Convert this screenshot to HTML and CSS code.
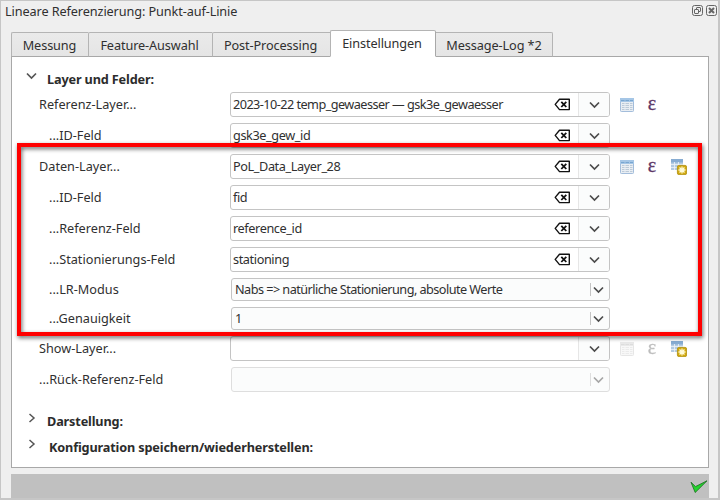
FILE: index.html
```html
<!DOCTYPE html>
<html lang="de">
<head>
<meta charset="utf-8">
<title>Lineare Referenzierung: Punkt-auf-Linie</title>
<link rel="stylesheet" href="styles.css">
</head>
<body>
<svg class="defs" width="0" height="0">
  <symbol id="down" viewBox="0 0 11 8"><path d="M1 1.5 5.5 6 10 1.5" fill="none" stroke="currentColor" stroke-width="1.7"/></symbol>
  <symbol id="right" viewBox="0 0 8 10"><path d="M1.5 1 6 5 1.5 9" fill="none" stroke="currentColor" stroke-width="1.5"/></symbol>
  <symbol id="clear" viewBox="0 0 17 13"><path d="M5.5 1.2H15.3V11.6H5.5L1.2 6.4Z" fill="#fff" stroke="#111" stroke-width="1.4" stroke-linejoin="round"/><path d="M7.3 3.8 12.3 9M12.3 3.8 7.3 9" stroke="#111" stroke-width="1.8"/></symbol>
  <symbol id="table" viewBox="0 0 14 14"><rect x=".5" y=".5" width="13" height="13" rx=".8" fill="#e9eef3" stroke="#a3bddb"/><path d="M0 0H14V4H0Z" fill="#a5c6e6"/><path d="M1 2.500H4.500M5.500 2.500H9M10 2.500H13" stroke="#79a6d0"/><path d="M2 5.500H4.500M5.500 5.500H9M10 5.500H12.500M2 7.500H4.500M5.500 7.500H9M10 7.500H12.500M2 9.500H4.500M5.500 9.500H9M10 9.500H12.500M2 11.500H4.500M5.500 11.500H9M10 11.500H12.500" stroke="#bccad8"/></symbol>
  <symbol id="newtable" viewBox="0 0 16 16"><path d="M0 0H12V11H0Z" fill="#b4cbe2"/><path d="M0 0H12V3.500H0Z" fill="#87acd2"/><path d="M0 5.500H12M0 8.500H12M3.500 3V11M7.500 3V11" stroke="#eef3f8" stroke-width=".8"/><rect x="6.400" y="6.400" width="9.200" height="9.200" rx="1.500" fill="#d0a80e" stroke="#b08d08" stroke-width=".8"/><path d="M11 7.500V14.500M7.500 11H14.500M8.500 8.500 13.500 13.500M13.500 8.500 8.500 13.500" fill="none" stroke="#fffbd8" stroke-width="1.300"/></symbol>
</svg>
<div class="dock">
  <header class="titlebar">
    <span class="title">Lineare Referenzierung: Punkt-auf-Linie</span>
    <svg class="winbtns" width="26" height="12" viewBox="0 0 26 12" fill="none" stroke="#666">
      <rect x=".5" y=".5" width="10" height="10" rx="2"/><rect x="4.500" y="2.500" width="4" height="4" rx=".5"/><rect x="2.500" y="4.500" width="4" height="4" rx=".5" fill="#efefef"/>
      <rect x="14.500" y=".5" width="10" height="10" rx="2"/><path d="M17 3 22 8M22 3 17 8" stroke-width="2"/>
    </svg>
  </header>
  <nav class="tabs">
    <div class="tab t1"><span>Messung</span></div>
    <div class="tab t2"><span>Feature-Auswahl</span></div>
    <div class="tab t3"><span>Post-Processing</span></div>
    <div class="tab t4 active"><span>Einstellungen</span></div>
    <div class="tab t5"><span>Message-Log *2</span></div>
  </nav>
  <main class="panel">
    <div class="section first"><svg class="arrow" width="11" height="8"><use href="#down"/></svg><b>Layer und Felder:</b></div>
    <div class="form">
      <div class="row"><label>Referenz-Layer...</label><div class="combo"><span class="value long">2023-10-22 temp_gewaesser — gsk3e_gewaesser</span><svg class="clear"><use href="#clear"/></svg><i class="drop"><svg><use href="#down"/></svg></i></div><svg class="table"><use href="#table"/></svg><span class="eps">ε</span></div>
      <div class="row"><label class="sub">...ID-Feld</label><div class="combo"><span class="value">gsk3e_gew_id</span><svg class="clear"><use href="#clear"/></svg><i class="drop"><svg><use href="#down"/></svg></i></div></div>
      <div class="row"><label>Daten-Layer...</label><div class="combo"><span class="value">PoL_Data_Layer_28</span><svg class="clear"><use href="#clear"/></svg><i class="drop"><svg><use href="#down"/></svg></i></div><svg class="table"><use href="#table"/></svg><span class="eps">ε</span><svg class="newtable"><use href="#newtable"/></svg></div>
      <div class="row"><label class="sub">...ID-Feld</label><div class="combo"><span class="value">fid</span><svg class="clear"><use href="#clear"/></svg><i class="drop"><svg><use href="#down"/></svg></i></div></div>
      <div class="row"><label class="sub">...Referenz-Feld</label><div class="combo"><span class="value">reference_id</span><svg class="clear"><use href="#clear"/></svg><i class="drop"><svg><use href="#down"/></svg></i></div></div>
      <div class="row"><label class="sub">...Stationierungs-Feld</label><div class="combo"><span class="value">stationing</span><svg class="clear"><use href="#clear"/></svg><i class="drop"><svg><use href="#down"/></svg></i></div></div>
      <div class="row low"><label class="sub">...LR-Modus</label><div class="combo plain"><span class="value long">Nabs =&gt; natürliche Stationierung, absolute Werte</span><i class="drop"><svg><use href="#down"/></svg></i></div></div>
      <div class="row low"><label class="sub">...Genauigkeit</label><div class="combo plain"><span class="value">1</span><i class="drop"><svg><use href="#down"/></svg></i></div></div>
      <div class="row"><label>Show-Layer...</label><div class="combo"><span class="value"></span><i class="drop"><svg><use href="#down"/></svg></i></div><svg class="table off"><use href="#table"/></svg><span class="eps off">ε</span><svg class="newtable"><use href="#newtable"/></svg></div>
      <div class="row"><label>...Rück-Referenz-Feld</label><div class="combo plain disabled"><span class="value"></span><i class="drop"><svg><use href="#down"/></svg></i></div></div>
    </div>
    <div class="section second"><svg class="arrow" width="8" height="10"><use href="#right"/></svg><b>Darstellung:</b></div>
    <div class="section third"><svg class="arrow" width="8" height="10"><use href="#right"/></svg><b>Konfiguration speichern/wiederherstellen:</b></div>
  </main>
  <footer class="status"><svg width="18" height="14" viewBox="0 0 18 14"><path d="M1 2.200 5.500 6.600 17 .8 5.200 12.500Z" fill="#22d52c" stroke="#26742a" stroke-width=".9" stroke-linejoin="round"/></svg></footer>
  <div class="highlight"></div>
</div>
</body>
</html>
```
FILE: styles.css
```css
* { box-sizing: border-box; }
body { margin: 0; background: #efefef; color: #303030; font: 12.7px/18px "Noto Sans", sans-serif; letter-spacing: -0.1px; }
svg { display: block; flex: none; }
.defs { position: absolute; }
.dock { position: relative; width: 720px; height: 500px; overflow: hidden; border: 1px solid #c6c6c6; border-right-width: 2px; border-bottom-width: 2px; display: flex; flex-direction: column; padding: 0 9px 0 10px; }
.titlebar { height: 29px; flex: none; display: flex; justify-content: space-between; align-items: flex-start; margin: 0 -8px 0 -6px; padding-top: 1px; }
.winbtns { margin: 3px -1px 0 0; }
.tabs { height: 27px; flex: none; display: flex; align-items: flex-end; margin-bottom: -1px; z-index: 1; letter-spacing: -0.1px; }
.tab { height: 25px; border: 1px solid #b4b4b4; border-right: 0; border-bottom-color: #a8a8a8; background: linear-gradient(#eaeaea, #e5e5e5); text-align: center; line-height: 24px; white-space: nowrap; border-top-left-radius: 2px; }
.t1 { width: 77px; padding-right: 1px; } .t2 { width: 124px; padding-right: 2px; } .t3 { width: 118px; padding-right: 2px; } .t4 { width: 106px; padding-right: 2px; } .t5 { width: 117px; border-right: 1px solid #b4b4b4; border-left: 0; border-radius: 0 2px 0 0; }
.active { height: 27px; background: #fff; border-right: 1px solid #a8a8a8; border-bottom-color: #fff; border-radius: 2px 2px 0 0; line-height: 25px; }
.panel { height: 412px; flex: none; border: 1px solid #a8a8a8; background: #fff; }
.section { display: flex; height: 18px; padding-left: 15px; color: #2c2c2c; }
.section b { font-size: 12.7px; letter-spacing: -0.15px; }
.arrow { color: #555; }
.first { margin-top: 13px; margin-bottom: 4px; padding-left: 14px; }
.first .arrow { margin: 2px 10px 0 0; }
.form { display: flex; flex-direction: column; gap: 6px; padding-left: 27px; }
.row { height: 25px; display: flex; align-items: center; }
.row.low { height: 23px; }
label { width: 191px; flex: none; white-space: nowrap; padding-bottom: 1px; letter-spacing: 0; }
label.sub { padding-left: 10px; }
.combo { width: 380px; height: 100%; flex: none; display: flex; align-items: center; border: 1px solid #c4c4c4; border-radius: 3px; background: #fff; padding-left: 2px; }
.value { flex: 1; white-space: nowrap; letter-spacing: -0.4px; padding-bottom: 1px; }
.value.long { letter-spacing: -0.55px; }
.clear { width: 17px; height: 13px; margin-right: 7px; }
.drop { width: 31px; height: 100%; display: flex; align-items: center; justify-content: center; border-left: 1px solid #e6e6e6; background: #fbfcfc; color: #4c4c4c; border-radius: 0 2px 2px 0; }
.drop svg { width: 11px; height: 8px; }
.plain { width: 379px; margin-left: 1px; background: #fbfcfc; padding-left: 3px; }
.plain .drop { width: 18px; height: 13px; margin-right: 1px; padding-right: 2px; border-color: #c4c4c4; }
.disabled { border-color: #dedede; }
.disabled .drop { color: #a6a6a6; border-color: #dedede; }
.table { width: 14px; height: 14px; margin-left: 10px; }
.eps { width: 12px; margin-left: 12px; font: 20px/18px "Liberation Serif", serif; color: #5c3566; -webkit-text-stroke: .3px currentColor; text-align: center; padding-bottom: 4px; letter-spacing: 0; }
.newtable { width: 16px; height: 16px; margin-left: 13px; }
.off { filter: grayscale(1); opacity: .35; }
.second { margin-top: 20px; }
.third { margin-top: 8px; }
.second .arrow, .third .arrow { margin: 1px 11px 0 1px; }
.third .arrow { margin-right: 13px; }
.status { height: 24px; flex: none; margin-top: 6px; background: #c0c0c0; display: flex; justify-content: flex-end; padding: 6px 1px 0 0; }
.highlight { position: absolute; left: 16px; top: 142px; width: 685px; height: 193px; border: 4px solid #f00; filter: drop-shadow(1px 2px 2px rgba(0,0,0,.6)); z-index: 2; }
```
